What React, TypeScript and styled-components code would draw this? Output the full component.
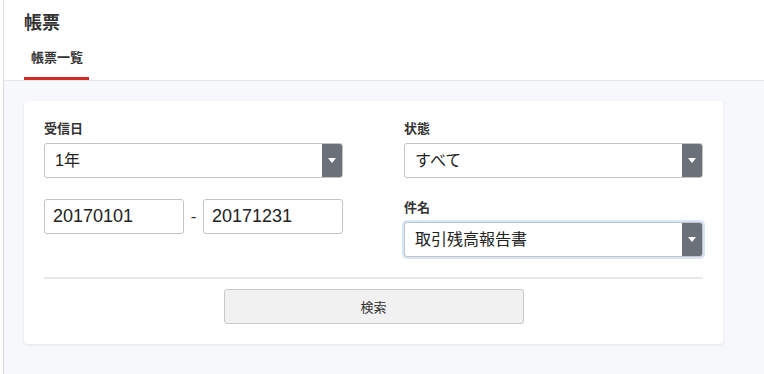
import React from 'react'
import styled, { createGlobalStyle } from 'styled-components'

const GlobalStyle = createGlobalStyle`
    html, body {
        margin: 0;
        padding: 0;
        background: #ffffff;
    }
    body {
        font-family: "Liberation Sans", "Noto Sans CJK JP", sans-serif;
        color: #333;
    }
    * {
        box-sizing: border-box;
    }
`

const Page = styled.div`
    margin-left: 3px;
    border-left: 1px solid #dcdcdc;
    min-height: 100vh;
    display: flex;
    flex-direction: column;
    background: #f7f8fb;
`
const Header = styled.header`
    background: #fff;
    padding: 11px 0 0 20px;
    border-bottom: 1px solid #e6e7ea;
`
const Title = styled.h1`
    margin: 0;
    font-size: 18px;
    line-height: 24px;
    font-weight: bold;
    color: #333;
`
const Tabs = styled.nav`
    display: flex;
    margin-top: 11px;
`
const Tab = styled.div<{ $active?: boolean }>`
    padding: 0 6px 7px 7px;
    font-size: 13px;
    line-height: 24px;
    font-weight: bold;
    color: #333;
    border-bottom: 3px solid ${({ $active }) => ($active ? '#d42a26' : 'transparent')};
`
const Content = styled.main`
    padding: 20px 41px 20px 20px;
`
const Card = styled.section`
    background: #fff;
    border-radius: 4px;
    box-shadow: 0 1px 3px rgba(0, 0, 0, 0.09);
    padding: 19px 20px 20px 20px;
`
const Grid = styled.div`
    display: grid;
    grid-template-columns: 299px 299px;
    column-gap: 61px;
`
const Column = styled.div`
    display: flex;
    flex-direction: column;
    gap: 21px;
`
const Field = styled.div`
    display: flex;
    flex-direction: column;
`
const Label = styled.label`
    font-size: 13px;
    line-height: 18px;
    font-weight: bold;
    color: #333;
    margin-bottom: 5px;
`
const SelectBox = styled.div<{ $focused?: boolean }>`
    display: flex;
    height: 35px;
    border: 1px solid #c4c4c4;
    border-radius: 3px;
    overflow: hidden;
    background: #fff;
    box-shadow: ${({ $focused }) => ($focused ? '0 0 0 2px #d7e6fb' : 'none')};
`
const Select = styled.select`
    flex: 1;
    appearance: none;
    border: none;
    outline: none;
    background: transparent;
    padding: 0 10px;
    font-family: "Liberation Sans", "Noto Sans CJK JP", sans-serif;
    font-size: 16px;
    color: #222;
`
const Arrow = styled.span`
    width: 20px;
    background: #6b7178;
    display: flex;
    align-items: center;
    justify-content: center;
    &::after {
        content: '';
        border-left: 4px solid transparent;
        border-right: 4px solid transparent;
        border-top: 5px solid #fff;
    }
`
const DateRow = styled.div`
    display: flex;
    align-items: center;
`
const DateInput = styled.input`
    width: 140px;
    height: 35px;
    border: 1px solid #c4c4c4;
    border-radius: 3px;
    padding: 0 8px;
    font-family: "Liberation Sans", "Noto Sans CJK JP", sans-serif;
    font-size: 18px;
    color: #222;
    outline: none;
`
const Dash = styled.span`
    width: 20px;
    text-align: center;
    font-size: 17px;
    color: #333;
`
const Divider = styled.hr`
    border: none;
    height: 2px;
    background: #e8e8e8;
    margin: 20px 0 10px 0;
`
const Actions = styled.div`
    display: flex;
    justify-content: center;
`
const Button = styled.button`
    width: 300px;
    height: 35px;
    background: #f1f1f1;
    border: 1px solid #c8c8c8;
    border-radius: 3px;
    font-family: "Liberation Sans", "Noto Sans CJK JP", sans-serif;
    font-size: 13px;
    color: #333;
`

const Dropdown = ({ value, focused }: { value: string; focused?: boolean }) => (
    <SelectBox $focused={focused}>
        <Select defaultValue={value}>
            <option>{value}</option>
        </Select>
        <Arrow />
    </SelectBox>
)

const App = () => {
    return (
        <>
            <GlobalStyle />
            <Page>
                <Header>
                    <Title>帳票</Title>
                    <Tabs>
                        <Tab $active>帳票一覧</Tab>
                    </Tabs>
                </Header>
                <Content>
                    <Card>
                        <Grid>
                            <Column>
                                <Field>
                                    <Label>受信日</Label>
                                    <Dropdown value='1年' />
                                </Field>
                                <DateRow>
                                    <DateInput defaultValue='20170101' />
                                    <Dash>-</Dash>
                                    <DateInput defaultValue='20171231' />
                                </DateRow>
                            </Column>
                            <Column>
                                <Field>
                                    <Label>状態</Label>
                                    <Dropdown value='すべて' />
                                </Field>
                                <Field>
                                    <Label>件名</Label>
                                    <Dropdown value='取引残高報告書' focused />
                                </Field>
                            </Column>
                        </Grid>
                        <Divider />
                        <Actions>
                            <Button>検索</Button>
                        </Actions>
                    </Card>
                </Content>
            </Page>
        </>
    )
}

export default App
